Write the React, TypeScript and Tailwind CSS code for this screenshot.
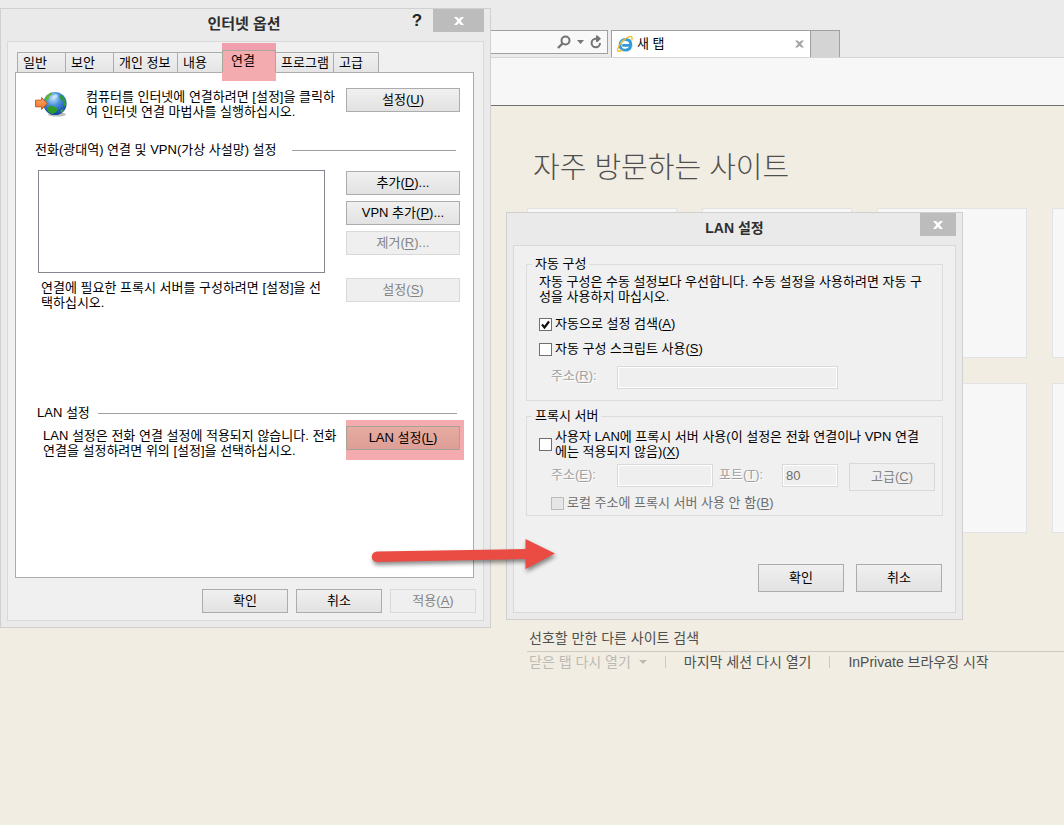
import type { ReactNode } from 'react';

const tabs = [
  { label: '일반', width: 'w-[49px]' },
  { label: '보안', width: 'w-[49px]' },
  { label: '개인 정보', width: 'w-[65px]' },
  { label: '내용', width: 'w-[46px]' },
  { label: '연결', width: 'w-[54px]', active: true },
  { label: '프로그램', width: 'w-[59px]' },
  { label: '고급', width: 'w-[46px]' },
];

interface ButtonProps {
  children: ReactNode;
  className?: string;
  disabled?: boolean;
}

function Button({ children, className = 'h-6 w-[114px]', disabled }: ButtonProps) {
  const look = disabled
    ? 'border-[#d9d9d9] bg-[#efefef] text-[#838383]'
    : 'border-[#acacac] bg-gradient-to-b from-[#f0f0f0] to-[#e2e2e2]';
  return (
    <button
      type="button"
      disabled={disabled}
      className={`flex shrink-0 items-center justify-center border leading-4 whitespace-nowrap ${look} ${className}`}
    >
      {children}
    </button>
  );
}

// Keyboard shortcut after a label, e.g. (U)
function Key({ k }: { k: string }) {
  return (
    <span>
      (<span className="underline underline-offset-2">{k}</span>)
    </span>
  );
}

function CloseIcon({ className }: { className: string }) {
  return (
    <svg viewBox="0 0 10 8" className={className} aria-hidden="true">
      <path d="M0 0h3l2 2 2-2h3L6.6 4 10 8H7L5 6 3 8H0l3.4-4z" fill="currentColor" />
    </svg>
  );
}

function GlobeIcon() {
  return (
    <svg viewBox="0 0 32 28" className="mt-0.5 h-7 w-8 shrink-0" aria-hidden="true">
      <defs>
        <radialGradient id="ocean" cx="0.42" cy="0.28" r="0.75">
          <stop offset="0" stopColor="#c4e4fa" />
          <stop offset="0.4" stopColor="#4e94dc" />
          <stop offset="1" stopColor="#0b3f9c" />
        </radialGradient>
        <linearGradient id="orange" x1="0" y1="0" x2="0" y2="1">
          <stop offset="0" stopColor="#ffb070" />
          <stop offset="1" stopColor="#f26a1c" />
        </linearGradient>
      </defs>
      <ellipse cx="22" cy="24.5" rx="9" ry="2" fill="#bdbdbd" />
      <circle cx="20" cy="13.5" r="11.6" fill="url(#ocean)" />
      <path d="M9.500 9c1.500-3.500 4-5.800 8-6.800l-1 2.800-2.500 1.500-.5 3-2 1.500z" fill="#5cb531" />
      <path d="M25 4.500l3 2 2.500 4 .6 4-1.600 2.500-1.500-3 .5-2.500-2.500-1.500-1.500-3z" fill="#2f9a3b" />
      <path d="M12 17.500l4-2 5 2 2 1.500-2 3-3.500 2-4-2z" fill="#2e9c27" />
      <path d="M26 20l3-1-1.500 2.500-2.500 1.500z" fill="#46a83a" />
      <path d="M17.500 6l3.500-2 2 2-2 2.500-3-.5z" fill="#d9effc" opacity="0.7" />
      <path d="M.6 10.200h6V7.500l5.500 6-5.500 6v-2.700h-6z" fill="url(#orange)" stroke="#c4571b" />
    </svg>
  );
}

function IeIcon() {
  return (
    <svg viewBox="0 0 16 16" className="size-4 shrink-0" aria-hidden="true">
      <path
        d="M13.600 10.800C12.800 13 10.900 14.200 8.600 14.200 5.300 14.200 3 12 3 8.900 3 5.800 5.300 3.500 8.500 3.500c3.300 0 5.400 2.200 5.400 5.800H5.200"
        fill="none"
        stroke="#2f9bd8"
        strokeWidth="2.800"
      />
      <path d="M3.500 7.200C4.300 5 6.200 3.800 8.500 3.800" fill="none" stroke="#86cdf1" strokeWidth="1.200" />
      <path
        d="M14.500 4.500c.9-2 .8-3.400-.3-3.800C11.500-.2 5.500 4.200 2.500 9 .6 12 .1 14.700 1.400 15.300c1 .4 2.500-.3 4.100-1.400"
        fill="none"
        stroke="#f4bb1a"
        strokeWidth="1.300"
      />
    </svg>
  );
}

function Browser() {
  return (
    <div className="min-h-screen overflow-hidden bg-[#f1ede2] text-sm text-[#4f4f4f]">
      <header>
        <div className="flex items-start gap-[3px] border-b border-[#d6d6d6] bg-[#ebebeb] pt-[30px]">
          <div className="flex h-6 w-[608px] shrink-0 items-center border border-[#a0a0a0] bg-[#f8f8f8] pr-[5px] text-[#747474]">
            <input aria-label="주소 표시줄" className="min-w-0 flex-1 bg-transparent outline-none" />
            <button type="button" aria-label="검색">
              <svg viewBox="0 0 14 14" className="size-3.5" aria-hidden="true">
                <circle cx="8.500" cy="5.500" r="4" fill="none" stroke="currentColor" strokeWidth="2" />
                <path d="M5.500 8.500L1 13" stroke="currentColor" strokeWidth="2.400" />
              </svg>
            </button>
            <button type="button" aria-label="목록 표시" className="px-1.5">
              <svg viewBox="0 0 7 4" className="h-1 w-[7px]" aria-hidden="true">
                <path d="M0 0h7L3.500 4z" fill="currentColor" />
              </svg>
            </button>
            <button type="button" aria-label="새로 고침">
              <svg viewBox="0 0 12 14" className="h-3.5 w-3" aria-hidden="true">
                <path d="M7 3.800H5.800A4.200 4.200 0 1 0 10 8" fill="none" stroke="currentColor" strokeWidth="2" />
                <path d="M6 .5v6.500h1.500L11 3.800 7.500.5z" fill="currentColor" />
              </svg>
            </button>
          </div>
          <div className="flex">
            <div className="flex h-[27px] w-[200px] items-center border border-b-0 border-[#a0a0a0] bg-white pr-1.5 pl-[5px] text-[13px] text-black">
              <IeIcon />
              <span className="ml-1 flex-1">새 탭</span>
              <button type="button" aria-label="탭 닫기" className="text-[#a5a5a5]">
                <CloseIcon className="h-2 w-[9px]" />
              </button>
            </div>
            <button type="button" aria-label="새 탭 열기" className="-ml-px h-[27px] w-[30px] border border-b-0 border-[#a0a0a0] bg-[#d4d4d4]" />
          </div>
        </div>
        <div className="h-12 border-b border-[#6f6f6f] bg-[#f7f7f7]" />
      </header>

      <main className="pt-[42px] pl-[527px]">
        <h1 className="pl-1.5 text-[29px] leading-10 font-light whitespace-nowrap">자주 방문하는 사이트</h1>
        <div className="mt-5 grid w-max grid-cols-4 gap-[25px]">
          {Array.from({ length: 8 }, (_, i) => (
            <div key={i} className="size-[150px] border border-[#e1e3e5] bg-[#f7f7f7]" />
          ))}
        </div>
        <a href="#suggested" className="mt-[93px] block border-b border-[#cbcac7] pl-0.5 leading-[25px] whitespace-nowrap">
          선호할 만한 다른 사이트 검색
        </a>
        <nav className="flex items-center pl-0.5 leading-5 whitespace-nowrap">
          <a href="#closed" className="flex items-center gap-2 text-[#bcbab5]">
            닫은 탭 다시 열기
            <svg viewBox="0 0 8 4" className="h-1 w-2" aria-hidden="true">
              <path d="M0 0h8L4 4z" fill="currentColor" />
            </svg>
          </a>
          <span className="mx-[18px] h-3 w-px bg-[#c9c9c9]" />
          <a href="#session">마지막 세션 다시 열기</a>
          <span className="mx-[18px] h-3 w-px bg-[#c9c9c9]" />
          <a href="#inprivate">InPrivate 브라우징 시작</a>
        </nav>
      </main>
    </div>
  );
}

function SectionTitle({ children }: { children: ReactNode }) {
  return (
    <h3 className="flex items-center leading-4 whitespace-nowrap">
      {children}
      <span className="h-px flex-1 bg-[#a0a0a0]" />
    </h3>
  );
}

function InternetOptions() {
  return (
    <section aria-label="인터넷 옵션" className="absolute top-2 left-0 z-10 w-[491px] border border-[#d0d0d1] bg-[#eaeaea] px-1.5 pb-1.5">
      <div className="flex h-8 items-start">
        <h2 className="flex-1 pl-20 text-center text-[15px] leading-[30px] font-bold text-[#2e2e2e]">인터넷 옵션</h2>
        <button type="button" aria-label="도움말" className="w-8 text-[17px] leading-6 font-bold text-[#222]">
          ?
        </button>
        <button type="button" aria-label="닫기" className="flex h-[23px] w-[51px] items-center justify-center bg-[#bcbcbc] text-white">
          <CloseIcon className="h-2 w-2.5" />
        </button>
      </div>

      <div className="border border-[#d9d9d9] bg-[#f0f0f0] px-[7px] pt-2 pb-[7px]">
        <div role="tablist" className="relative flex h-[22px] items-end pl-0.5">
          {tabs.map((tab, i) =>
            tab.active ? (
              <div key={tab.label} className="relative z-10 -ml-px">
                <span className="absolute -top-[7px] -bottom-[9px] left-0 w-full bg-[#f4abb0]" />
                <span className="absolute -top-[7px] left-0 h-[7px] w-full bg-[#f19eaf]" />
                <button
                  type="button"
                  role="tab"
                  aria-selected="true"
                  className={`relative block h-[22px] border border-b-0 border-[#a3a99b] pb-0.5 pl-2 text-left leading-5 ${tab.width}`}
                >
                  {tab.label}
                </button>
              </div>
            ) : (
              <button
                key={tab.label}
                type="button"
                role="tab"
                aria-selected="false"
                className={`h-5 border border-b-0 border-[#acacac] bg-gradient-to-b from-[#f0f0f0] to-[#e5e5e5] pl-[5px] text-left leading-4 whitespace-nowrap ${tab.width} ${i > 0 ? '-ml-px' : ''}`}
              >
                {tab.label}
              </button>
            ),
          )}
        </div>

        <div role="tabpanel" className="min-h-[506px] w-[459px] border border-[#acacac] bg-white pt-[15px] pr-[13px] pl-[19px]">
          <div className="flex items-start">
            <GlobeIcon />
            <p className="ml-[19px] flex-1 py-px leading-[15px] whitespace-nowrap">
              컴퓨터를 인터넷에 연결하려면 [설정]을 클릭하
              <br />여 인터넷 연결 마법사를 실행하십시오.
            </p>
            <Button>
              설정
              <Key k="U" />
            </Button>
          </div>

          <div className="mt-[22px] pr-1">
            <SectionTitle>
              <span className="mr-[15px]">전화(광대역) 연결 및 VPN(가상 사설망) 설정</span>
            </SectionTitle>
          </div>
          <div className="mt-3 flex justify-between pl-[3px]">
            <div className="w-[287px]">
              <div role="listbox" aria-label="연결" className="h-[103px] border border-[#828790]" />
              <p className="mt-[7px] pl-[3px] leading-[15px] whitespace-nowrap">
                연결에 필요한 프록시 서버를 구성하려면 [설정]을 선
                <br />
                택하십시오.
              </p>
            </div>
            <div className="flex flex-col gap-1.5 pt-px">
              <Button>
                추가
                <Key k="D" />
                ...
              </Button>
              <Button>
                VPN 추가
                <Key k="P" />
                ...
              </Button>
              <Button disabled>
                제거
                <Key k="R" />
                ...
              </Button>
              <Button disabled className="mt-[17px] h-6 w-[114px]">
                설정
                <Key k="S" />
              </Button>
            </div>
          </div>

          <div className="mt-[95px] pr-[3px] pl-0.5">
            <SectionTitle>
              <span className="mr-2">LAN 설정</span>
            </SectionTitle>
          </div>
          <div className="-mt-px -mr-1 flex items-start justify-between pl-2">
            <p className="pt-2 leading-[15px] whitespace-nowrap">
              LAN 설정은 전화 연결 설정에 적용되지 않습니다. 전화
              <br />
              연결을 설정하려면 위의 [설정]을 선택하십시오.
            </p>
            <div className="bg-[#f4abb0] pt-1.5 pr-1 pb-2.5">
              <button
                type="button"
                className="flex h-6 w-[114px] items-center justify-center border border-[#a6a396] bg-gradient-to-b from-[#e6aba1] to-[#dd9e96] leading-4"
              >
                <span>LAN 설정</span>
                <Key k="L" />
              </button>
            </div>
          </div>
        </div>

        <div className="mt-[11px] flex justify-end gap-2">
          <Button className="h-6 w-[86px]">확인</Button>
          <Button className="h-6 w-[86px]">취소</Button>
          <Button className="h-6 w-[86px]" disabled>
            적용
            <Key k="A" />
          </Button>
        </div>
      </div>
    </section>
  );
}

interface CheckProps {
  children: ReactNode;
  checked?: boolean;
  disabled?: boolean;
}

function Check({ children, checked, disabled }: CheckProps) {
  return (
    <label className={`flex items-center gap-[3px] whitespace-nowrap ${disabled ? 'text-[#6d6d6d]' : ''}`}>
      <span className="relative size-[13px] shrink-0">
        <input
          type="checkbox"
          defaultChecked={checked}
          disabled={disabled}
          className="peer block size-[13px] appearance-none border border-[#707070] bg-white disabled:border-[#bcbcbc] disabled:bg-[#e6e6e6]"
        />
        <svg viewBox="0 0 13 13" className="pointer-events-none absolute inset-0 hidden peer-checked:block" aria-hidden="true">
          <path d="M3 6.500l2.500 3L10 3.500" fill="none" stroke="#111" strokeWidth="2.200" />
        </svg>
      </span>
      <span>{children}</span>
    </label>
  );
}

const field = 'h-[23px] border border-[#d9d9d9] bg-[#efefef] px-[3px] text-[#6d6d6d] shadow-[inset_0_0_0_1px_#fff]';
const fieldLabel = 'text-[#a0a0a0] [text-shadow:1px_1px_0_#fff]';

function LanSettings() {
  return (
    <section aria-label="LAN 설정" className="absolute top-[212px] left-[506px] z-20 w-[457px] border border-[#d0d0d1] bg-[#eaeaea] px-1.5 pb-1.5">
      <div className="flex h-8 items-start">
        <h2 className="flex-1 pl-9 text-center text-sm leading-[30px] font-bold text-[#2e2e2e]">LAN 설정</h2>
        <button type="button" aria-label="닫기" className="flex h-[23px] w-9 items-center justify-center bg-[#bcbcbc] text-white">
          <CloseIcon className="h-2 w-2.5" />
        </button>
      </div>

      <div className="border border-[#d9d9d9] bg-[#f0f0f0] px-3 pt-2.5 pb-5">
        <fieldset className="border border-[#dcdcdc] px-3 pb-[11px]">
          <legend className="-ml-[7px] px-[3px] leading-4">자동 구성</legend>
          <p className="pt-0.5 leading-[15px] whitespace-nowrap">
            자동 구성은 수동 설정보다 우선합니다. 수동 설정을 사용하려면 자동 구
            <br />
            성을 사용하지 마십시오.
          </p>
          <div className="mt-3 flex flex-col gap-[9px] leading-4">
            <Check checked>
              자동으로 설정 검색
              <Key k="A" />
            </Check>
            <Check>
              자동 구성 스크립트 사용
              <Key k="S" />
            </Check>
          </div>
          <div className="mt-[9px] flex items-start pl-3">
            <label htmlFor="script" className={`w-[66px] leading-5 ${fieldLabel}`}>
              주소
              <Key k="R" />:
            </label>
            <input id="script" disabled className={`w-[221px] ${field}`} />
          </div>
        </fieldset>

        <fieldset className="mt-[7px] border border-[#dcdcdc] pr-[7px] pb-1 pl-3">
          <legend className="-ml-[7px] px-[3px] leading-4">프록시 서버</legend>
          <div className="pt-[5px] leading-[15px]">
            <Check>
              사용자 LAN에 프록시 서버 사용(이 설정은 전화 연결이나 VPN 연결
              <br />
              에는 적용되지 않음)
              <Key k="X" />
            </Check>
          </div>
          <div className="mt-1 flex items-start pl-3">
            <label htmlFor="address" className={`w-[66px] leading-6 ${fieldLabel}`}>
              주소
              <Key k="E" />:
            </label>
            <input id="address" disabled className={`mt-px w-24 ${field}`} />
            <label htmlFor="port" className={`ml-1.5 w-[63px] leading-6 ${fieldLabel}`}>
              포트
              <Key k="T" />:
            </label>
            <input id="port" disabled defaultValue="80" className={`mt-px w-14 ${field}`} />
            <Button disabled className="ml-[11px] h-7 w-[86px]">
              고급
              <Key k="C" />
            </Button>
          </div>
          <div className="mt-1 pl-3 leading-4">
            <Check disabled>
              로컬 주소에 프록시 서버 사용 안 함
              <Key k="B" />
            </Check>
          </div>
        </fieldset>

        <div className="mt-12 flex justify-end gap-3 pr-px">
          <Button className="h-7 w-[86px]">확인</Button>
          <Button className="h-7 w-[86px]">취소</Button>
        </div>
      </div>
    </section>
  );
}

function Arrow() {
  return (
    <svg
      viewBox="0 0 190 42"
      className="pointer-events-none absolute top-[534px] left-[369px] z-30 h-[42px] w-[190px] drop-shadow-[1px_3px_2px_rgba(0,0,0,0.45)]"
      aria-hidden="true"
    >
      <path d="M8 17.500L156.500 15V5L186 19.500 156.500 35V25L8 28a5 5 0 0 1 0-10.500z" fill="#ea4b43" />
    </svg>
  );
}

export default function App() {
  return (
    <div className="relative overflow-hidden font-['Liberation_Sans','Noto_Sans_CJK_KR',sans-serif] text-[13px] text-black">
      <Browser />
      <InternetOptions />
      <LanSettings />
      <Arrow />
    </div>
  );
}
